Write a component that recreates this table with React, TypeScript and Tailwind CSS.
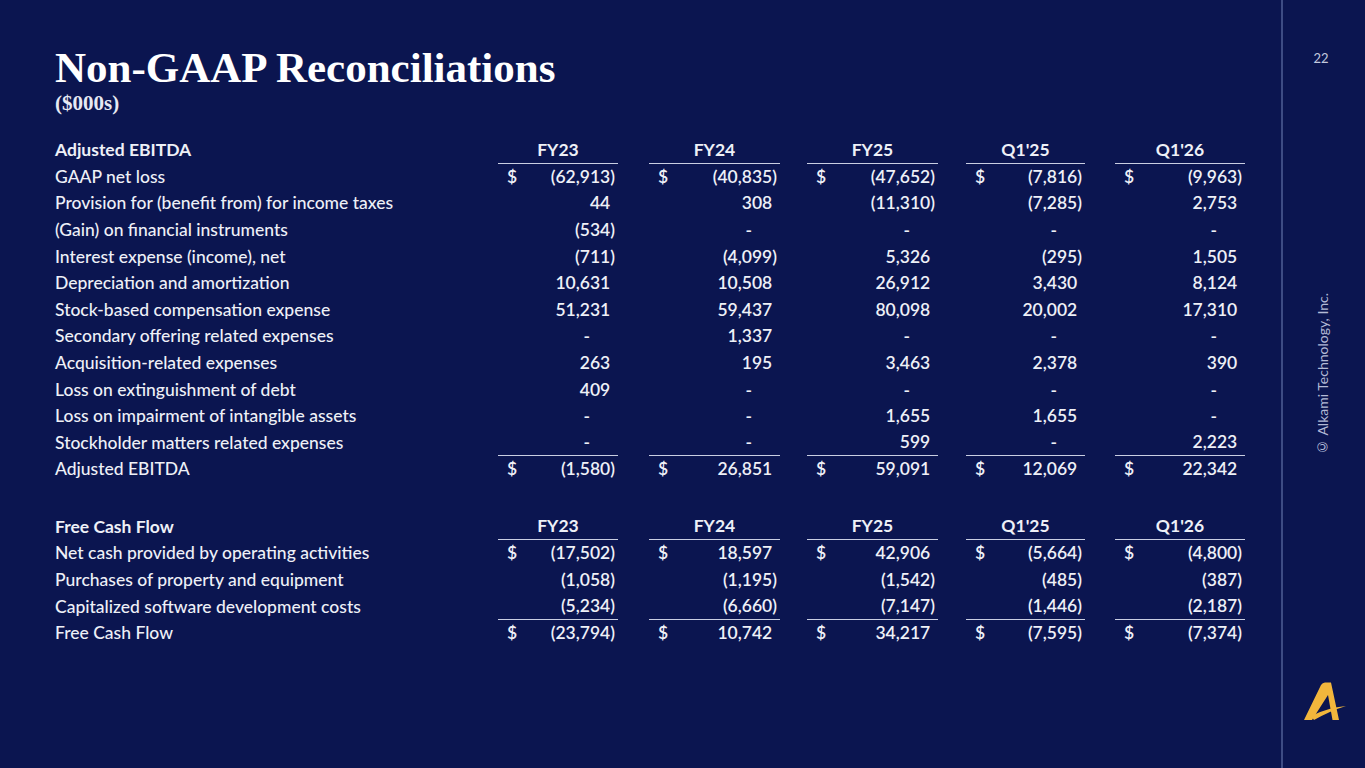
import React from 'react';

type Cell = { v: string; usd?: boolean };

interface Row {
    label: string;
    cells: Cell[];
    ruleBelow?: boolean;
}

// column widths / gaps taken from the slide
const colClass = [
    'w-[120px]',
    'w-[131px] ml-[31px]',
    'w-[131px] ml-[27px]',
    'w-[119px] ml-[28px]',
    'w-[130px] ml-[30px]',
];

const c = (v: string, usd = false): Cell => ({ v, usd });

const ebitdaRows: Row[] = [
    { label: 'GAAP net loss', cells: [c('(62,913)', true), c('(40,835)', true), c('(47,652)', true), c('(7,816)', true), c('(9,963)', true)] },
    { label: 'Provision for (benefit from) for income taxes', cells: [c('44'), c('308'), c('(11,310)'), c('(7,285)'), c('2,753')] },
    { label: '(Gain) on financial instruments', cells: [c('(534)'), c('-'), c('-'), c('-'), c('-')] },
    { label: 'Interest expense (income), net', cells: [c('(711)'), c('(4,099)'), c('5,326'), c('(295)'), c('1,505')] },
    { label: 'Depreciation and amortization', cells: [c('10,631'), c('10,508'), c('26,912'), c('3,430'), c('8,124')] },
    { label: 'Stock-based compensation expense', cells: [c('51,231'), c('59,437'), c('80,098'), c('20,002'), c('17,310')] },
    { label: 'Secondary offering related expenses', cells: [c('-'), c('1,337'), c('-'), c('-'), c('-')] },
    { label: 'Acquisition-related expenses', cells: [c('263'), c('195'), c('3,463'), c('2,378'), c('390')] },
    { label: 'Loss on extinguishment of debt', cells: [c('409'), c('-'), c('-'), c('-'), c('-')] },
    { label: 'Loss on impairment of intangible assets', cells: [c('-'), c('-'), c('1,655'), c('1,655'), c('-')] },
    { label: 'Stockholder matters related expenses', cells: [c('-'), c('-'), c('599'), c('-'), c('2,223')], ruleBelow: true },
    { label: 'Adjusted EBITDA', cells: [c('(1,580)', true), c('26,851', true), c('59,091', true), c('12,069', true), c('22,342', true)] },
];

const fcfRows: Row[] = [
    { label: 'Net cash provided by operating activities', cells: [c('(17,502)', true), c('18,597', true), c('42,906', true), c('(5,664)', true), c('(4,800)', true)] },
    { label: 'Purchases of property and equipment', cells: [c('(1,058)'), c('(1,195)'), c('(1,542)'), c('(485)'), c('(387)')] },
    { label: 'Capitalized software development costs', cells: [c('(5,234)'), c('(6,660)'), c('(7,147)'), c('(1,446)'), c('(2,187)')], ruleBelow: true },
    { label: 'Free Cash Flow', cells: [c('(23,794)', true), c('10,742', true), c('34,217', true), c('(7,595)', true), c('(7,374)', true)] },
];

const periods = ['FY23', 'FY24', 'FY25', "Q1'25", "Q1'26"];

const Value: React.FC<{ v: string }> = ({ v }) => {
    if (v === '-') return <span className="mr-[25px]">-</span>;
    if (v.startsWith('(')) return <span>{v}</span>;
    // accounting format: leave room for the closing paren
    return (
        <span>
            {v}
            <span className="invisible">)</span>
        </span>
    );
};

const Table: React.FC<{ title: string; rows: Row[] }> = ({ title, rows }) => (
    <div className="flex flex-col">
        <div className="flex h-[26.6px] items-center font-bold">
            <div className="w-[443px]">{title}</div>
            {periods.map((p, i) => (
                <div key={p} className={`${colClass[i]} h-full flex items-center justify-center border-b border-[#c9cee2]`}>
                    {p}
                </div>
            ))}
        </div>
        {rows.map((r) => (
            <div key={r.label} className="flex h-[26.6px] items-center">
                <div className="w-[443px]">{r.label}</div>
                {r.cells.map((cell, i) => (
                    <div
                        key={i}
                        className={`${colClass[i]} h-full flex items-center justify-between pl-[9px] pr-[3px] font-semibold ${r.ruleBelow ? 'border-b border-[#c9cee2]' : ''}`}
                    >
                        <span>{cell.usd ? '$' : ''}</span>
                        <Value v={cell.v} />
                    </div>
                ))}
            </div>
        ))}
    </div>
);

const AlkamiMark: React.FC = () => (
    <svg width="44" height="40" viewBox="0 0 44 40" fill="#f2b63c">
        <path d="M2 38 L19 3 Q20.5 0.5 23 0.5 L29 0.5 L37 38 L30.5 38 L26 13 L10 38 Z" />
        <path d="M9 34 Q26 25.5 44 24 Q29 28.5 12 38 Z" />
    </svg>
);

export default function App() {
    return (
        <div className="w-[1365px] h-[768px] bg-[#0b1550] flex overflow-hidden text-[#eef0f7]">
            {/* slide body */}
            <div className="w-[1281px] pl-[55px] pt-[45px]">
                <h1 className="font-['Liberation_Serif',serif] font-bold text-[43px] leading-[46px] text-white">
                    Non-GAAP Reconciliations
                </h1>
                <div className="font-['Liberation_Serif',serif] font-bold text-[21px] leading-[24px] text-[#e6e9f3]">
                    ($000s)
                </div>

                <div className="mt-[22px] font-['Lato',sans-serif] font-medium text-[17.5px] flex flex-col gap-[31px]">
                    <Table title="Adjusted EBITDA" rows={ebitdaRows} />
                    <Table title="Free Cash Flow" rows={fcfRows} />
                </div>
            </div>

            {/* divider */}
            <div className="w-[2px] h-full bg-[#3e4c84]" />

            {/* side rail */}
            <div className="flex-1 flex flex-col items-center pt-[50px] pb-[46px] font-['Lato',sans-serif]">
                <div className="text-[13px] leading-[16px] text-[#c3c9de] mr-[6px]">22</div>
                <div className="flex-1 flex items-center justify-center">
                    <span className="[writing-mode:vertical-rl] rotate-180 text-[14px] text-[#b3bad6] whitespace-nowrap mr-[4px]">
                        © Alkami Technology, Inc.
                    </span>
                </div>
                <AlkamiMark />
            </div>
        </div>
    );
}
